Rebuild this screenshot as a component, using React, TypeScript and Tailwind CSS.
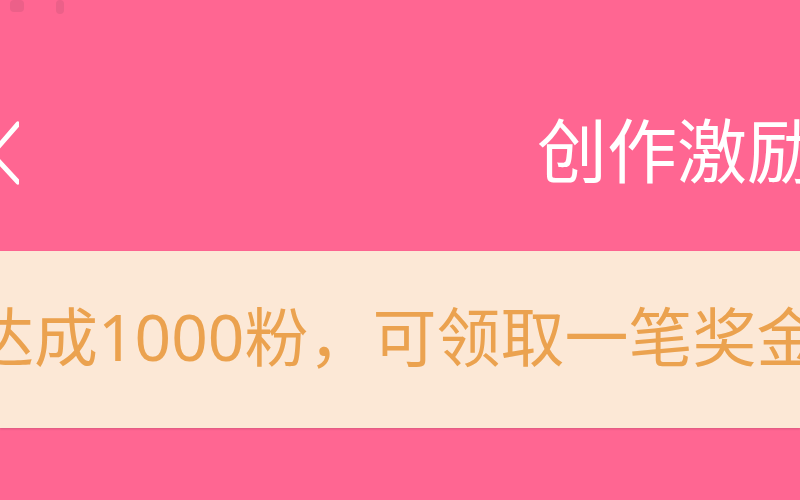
import React from 'react';

const BackIcon: React.FC = () => (
  <svg width="30" height="70" viewBox="0 0 30 70" className="shrink-0 -ml-[11px]">
    <path d="M29 5 L3 35 L29 63" fill="none" stroke="#ffffff" strokeWidth="5" strokeLinecap="round" strokeLinejoin="round" />
  </svg>
);

export default function App() {
  return (
    <div
      className="relative flex h-[500px] w-[800px] flex-col overflow-hidden bg-[#ff6692]"
      style={{ fontFamily: '"Noto Sans", "Noto Sans CJK SC", sans-serif' }}
    >
      {/* Status bar remnants */}
      <div className="flex h-[20px] items-start gap-8 pl-[10px] opacity-20">
        <div className="h-[12px] w-[14px] rounded-sm bg-[#a24a66]" />
        <div className="h-[14px] w-[8px] rounded-sm bg-[#a24a66]" />
      </div>

      {/* Header */}
      <header className="flex h-[231px] flex-col">
        <div className="mt-[99px] flex h-[70px] items-center">
          <BackIcon />
          <h1 className="ml-[518px] -mt-[6px] whitespace-nowrap text-[70px] leading-none font-normal text-white">
            创作激励
          </h1>
        </div>
      </header>

      {/* Reward banner */}
      <div className="flex h-[177px] items-center bg-[#fce8d6] shadow-[0_1px_2px_rgba(150,60,90,0.35)]">
        <p className="-ml-[30px] -mt-[6px] whitespace-nowrap text-[64px] leading-none text-[#eba24f]">
          达成1000粉，可领取一笔奖金
        </p>
      </div>

      <div className="flex-1" />
    </div>
  );
}
